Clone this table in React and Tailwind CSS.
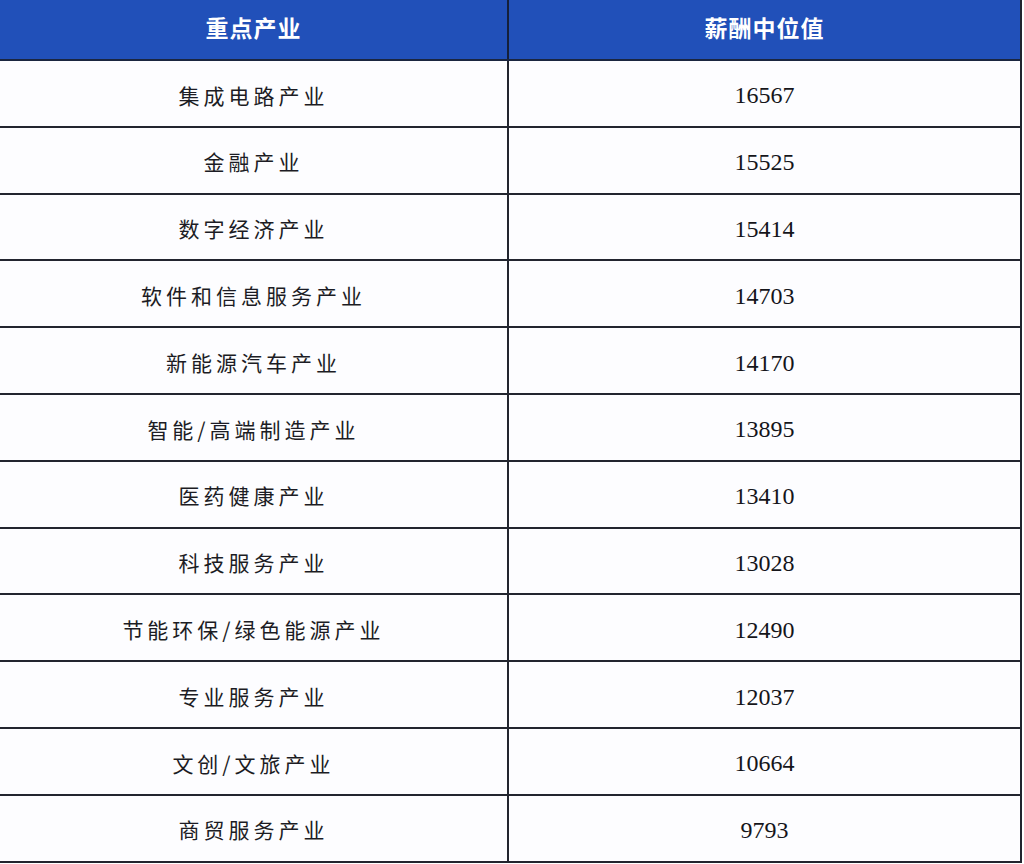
const rows = [
  ['集成电路产业', '16567'],
  ['金融产业', '15525'],
  ['数字经济产业', '15414'],
  ['软件和信息服务产业', '14703'],
  ['新能源汽车产业', '14170'],
  ['智能/高端制造产业', '13895'],
  ['医药健康产业', '13410'],
  ['科技服务产业', '13028'],
  ['节能环保/绿色能源产业', '12490'],
  ['专业服务产业', '12037'],
  ['文创/文旅产业', '10664'],
  ['商贸服务产业', '9793'],
]

export default function App() {
  return (
    <div className="w-[1024px] h-[864px] bg-white overflow-hidden">
      <div className="w-[1022px] border-r-2 border-[#22252f]">
        {/* Header */}
        <div className="flex h-[61px] bg-[#2150b9] border-b-2 border-[#1b2640] text-white font-bold text-[23px] tracking-[1px] font-[family-name:'Noto_Sans_CJK_SC',sans-serif]">
          <div className="w-[509px] border-r-2 border-[#15203a] flex items-center justify-center pb-1">
            重点产业
          </div>
          <div className="flex-1 flex items-center justify-center pb-1">
            薪酬中位值
          </div>
        </div>

        {/* Body */}
        {rows.map(([name, value]) => (
          <div key={name} className="flex h-[66.8px] border-b-2 border-[#22252f] bg-[#fdfdff]">
            <div className="w-[509px] border-r-2 border-[#22252f] flex items-center justify-center pt-1 text-[21px] tracking-[4px] text-[#1c1c24] font-[family-name:'Noto_Sans_CJK_SC',sans-serif]">
              {name}
            </div>
            <div className="flex-1 flex items-center justify-center pt-1 text-[24px] text-[#15151a] font-[family-name:'Liberation_Serif',serif]">
              {value}
            </div>
          </div>
        ))}
      </div>
    </div>
  )
}
